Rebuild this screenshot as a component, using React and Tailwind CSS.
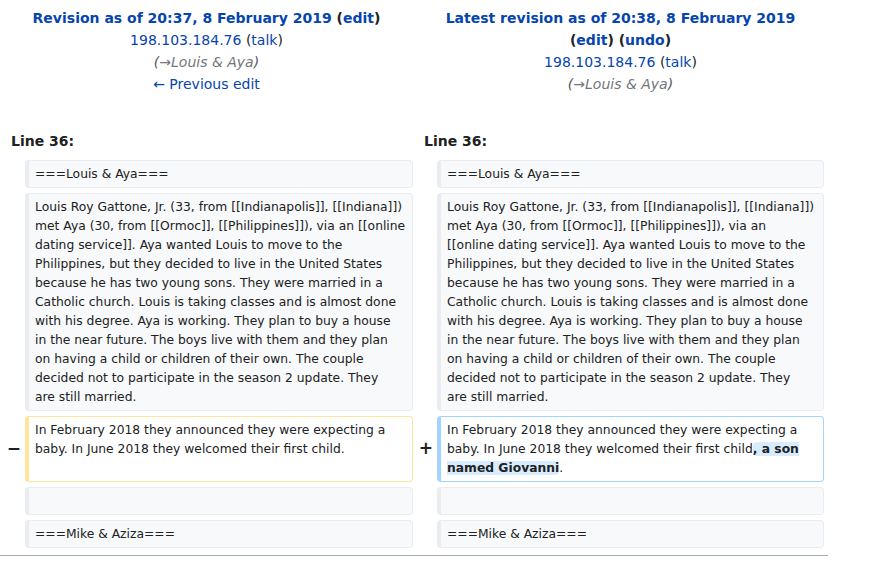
const font = { fontFamily: '"DejaVu Sans", sans-serif' };

// line breaks as they fall in the two columns
const leftLines = [
  "Louis Roy Gattone, Jr. (33, from [[Indianapolis]], [[Indiana]])",
  "met Aya (30, from [[Ormoc]], [[Philippines]]), via an [[online",
  "dating service]]. Aya wanted Louis to move to the",
  "Philippines, but they decided to live in the United States",
  "because he has two young sons. They were married in a",
  "Catholic church. Louis is taking classes and is almost done",
  "with his degree. Aya is working. They plan to buy a house",
  "in the near future. The boys live with them and they plan",
  "on having a child or children of their own. The couple",
  "decided not to participate in the season 2 update. They",
  "are still married.",
];

const rightLines = [
  "Louis Roy Gattone, Jr. (33, from [[Indianapolis]], [[Indiana]])",
  "met Aya (30, from [[Ormoc]], [[Philippines]]), via an",
  "[[online dating service]]. Aya wanted Louis to move to the",
  "Philippines, but they decided to live in the United States",
  "because he has two young sons. They were married in a",
  "Catholic church. Louis is taking classes and is almost done",
  "with his degree. Aya is working. They plan to buy a house",
  "in the near future. The boys live with them and they plan",
  "on having a child or children of their own. The couple",
  "decided not to participate in the season 2 update. They",
  "are still married.",
];

const Header = ({ children }) => (
  <div className="text-center text-[14px] leading-[22px] text-[#202122]">{children}</div>
);

const Context = ({ children }) => (
  <div className="rounded-[4px] border border-[#eaecf0] border-l-4 bg-[#f8f9fa] pl-[6px] pr-[6px] py-[3.5px] text-[12.32px] leading-[19px] text-[#202122] min-h-[28px]">
    {children}
  </div>
);

const Lines = ({ lines }) => (
  <Context>
    {lines.map((l, i) => (
      <div key={i} className="whitespace-nowrap">
        {l}
      </div>
    ))}
  </Context>
);

const Marker = ({ children }) => (
  <div className="flex items-center justify-end pr-[4px] text-[17px] font-bold text-[#202122]">{children}</div>
);

const App = () => {
  return (
    <div className="w-[874px] h-[572px] bg-white" style={font}>
      <div className="w-[828px]">
        <div className="grid grid-cols-[413px_415px] pt-[7px]">
          <Header>
            <div className="font-bold">
              <span className="text-[#0645ad]">Revision as of 20:37, 8 February 2019</span>{" "}
              (<span className="text-[#0645ad]">edit</span>)
            </div>
            <div>
              <span className="text-[#0645ad]">198.103.184.76</span> (<span className="text-[#0645ad]">talk</span>)
            </div>
            <div className="italic text-[#54595d]">
              (<span className="text-[#72777d]">→Louis &amp; Aya</span>)
            </div>
            <div className="text-[#0645ad]">← Previous edit</div>
          </Header>
          <Header>
            <div className="font-bold text-[#0645ad]">Latest revision as of 20:38, 8 February 2019</div>
            <div className="font-bold">
              (<span className="text-[#0645ad]">edit</span>) (<span className="text-[#0645ad]">undo</span>)
            </div>
            <div>
              <span className="text-[#0645ad]">198.103.184.76</span> (<span className="text-[#0645ad]">talk</span>)
            </div>
            <div className="italic text-[#54595d]">
              (<span className="text-[#72777d]">→Louis &amp; Aya</span>)
            </div>
          </Header>
        </div>

        <div className="grid grid-cols-[413px_415px] mt-[35px] text-[14px] leading-[22px] font-bold text-[#202122]">
          <div className="pl-[11px]">Line 36:</div>
          <div className="pl-[11px]">Line 36:</div>
        </div>

        <div className="grid grid-cols-[25px_388px_24px_387px] gap-y-[5px] mt-[8px] pb-[7px] border-b border-[#a2a9b1]">
          <div />
          <Context>===Louis &amp; Aya===</Context>
          <div />
          <Context>===Louis &amp; Aya===</Context>

          <div />
          <Lines lines={leftLines} />
          <div />
          <Lines lines={rightLines} />

          <Marker>−</Marker>
          <div className="rounded-[4px] border border-[#ffe49c] border-l-4 bg-white pl-[6px] pr-[7px] py-[3.5px] text-[12.32px] leading-[19px] text-[#202122]">
            In February 2018 they announced they were expecting a baby. In June 2018 they welcomed their first child.
          </div>
          <Marker>+</Marker>
          <div className="rounded-[4px] border border-[#a3d3ff] border-l-4 bg-white pl-[6px] pr-[7px] py-[3.5px] text-[12.32px] leading-[19px] text-[#202122]">
            In February 2018 they announced they were expecting a baby. In June 2018 they welcomed their first child
            <span className="font-bold bg-[#d8ecff] rounded-[4px]">, a son named Giovanni</span>.
          </div>

          <div />
          <Context> </Context>
          <div />
          <Context> </Context>

          <div />
          <Context>===Mike &amp; Aziza===</Context>
          <div />
          <Context>===Mike &amp; Aziza===</Context>
        </div>
      </div>
    </div>
  );
};

export default App;
